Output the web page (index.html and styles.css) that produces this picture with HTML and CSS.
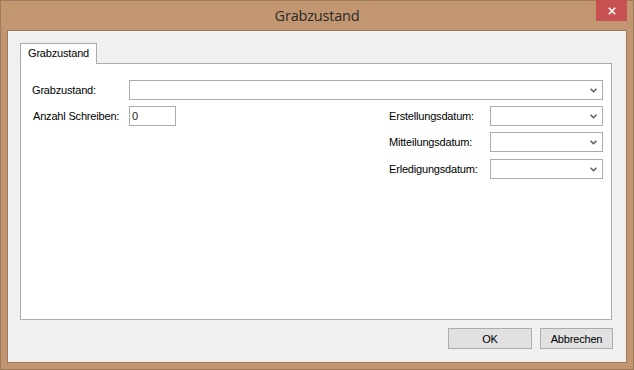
FILE: index.html
```html
<!DOCTYPE html>
<html lang="de">
<head>
<meta charset="utf-8">
<title>Grabzustand</title>
<link rel="stylesheet" href="styles.css">
</head>
<body>
<div class="window">
  <div class="titlebar">
    <span></span>
    <div class="title">Grabzustand</div>
    <div class="close">
      <svg width="8" height="8" viewBox="0 0 8 8"><path d="M0.8 0.8 L7.2 7.2 M7.2 0.8 L0.8 7.2" stroke="#fff" stroke-width="1.6" fill="none"/></svg>
    </div>
  </div>
  <div class="client">
    <div class="tabs">
      <div class="tabstrip"><div class="tab">Grabzustand</div></div>
      <div class="panel">
        <div class="row">
          <div class="label l1">Grabzustand:</div>
          <div class="combo wide"><svg class="chev" width="7" height="5" viewBox="0 0 7 5"><path d="M0.6 0.8 L3.5 3.7 L6.4 0.8" stroke="#5a5a5a" stroke-width="1.5" fill="none"/></svg></div>
        </div>
        <div class="split">
          <div class="row left">
            <div class="label l2">Anzahl Schreiben:</div>
            <div class="textbox">0</div>
          </div>
          <div class="dates">
            <div class="row"><div class="label l3">Erstellungsdatum:</div><div class="combo date"><svg class="chev" width="7" height="5" viewBox="0 0 7 5"><path d="M0.6 0.8 L3.5 3.7 L6.4 0.8" stroke="#5a5a5a" stroke-width="1.5" fill="none"/></svg></div></div>
            <div class="row"><div class="label l3">Mitteilungsdatum:</div><div class="combo date"><svg class="chev" width="7" height="5" viewBox="0 0 7 5"><path d="M0.6 0.8 L3.5 3.7 L6.4 0.8" stroke="#5a5a5a" stroke-width="1.5" fill="none"/></svg></div></div>
            <div class="row r3"><div class="label l3">Erledigungsdatum:</div><div class="combo date"><svg class="chev" width="7" height="5" viewBox="0 0 7 5"><path d="M0.6 0.8 L3.5 3.7 L6.4 0.8" stroke="#5a5a5a" stroke-width="1.5" fill="none"/></svg></div></div>
          </div>
        </div>
      </div>
    </div>
    <div class="footer">
      <div class="btn ok">OK</div>
      <div class="btn cancel">Abbrechen</div>
    </div>
  </div>
</div>
</body>
</html>
```
FILE: styles.css
```css
* { box-sizing: border-box; }
html, body { margin: 0; padding: 0; }
body {
  width: 634px; height: 370px; overflow: hidden;
  font-family: "Liberation Sans", Arial, sans-serif;
  font-size: 11px; color: #000;
  letter-spacing: -0.18px;
}
.window {
  width: 634px; height: 370px;
  background: #c19671;
  border: 1px solid #9c7a5b;
  display: flex; flex-direction: column;
}
.titlebar {
  height: 29px;
  display: grid;
  grid-template-columns: 1fr auto 1fr;
  align-items: start;
}
.title {
  font-family: "Open Sans", "Noto Sans", sans-serif;
  font-size: 14.5px;
  color: #2a2a2a;
  line-height: 29px;
  letter-spacing: -0.2px;
}
.close {
  justify-self: end;
  margin-top: -1px;
  margin-right: 6px;
  width: 31px; height: 21px;
  background: #c75050;
  display: flex; align-items: center; justify-content: center;
}
.client {
  flex: 1;
  margin: 0 6px 6px 6px;
  border: 1px solid #9c7a5b;
  background: #f0f0f0;
  padding: 12px 0 0 12px;
  display: flex; flex-direction: column;
}
.tabs { margin-right: 14px; display: flex; flex-direction: column; }
.tabstrip { display: flex; height: 20px; }
.tab {
  width: 77px; height: 21px;
  background: #fff;
  border: 1px solid #acacac;
  border-bottom: none;
  position: relative; z-index: 1;
  padding-left: 7px;
  line-height: 19px;
}
.panel {
  height: 257px;
  background: #fff;
  border: 1px solid #acacac;
  padding: 16px 8px 0 11px;
}
.row { display: flex; align-items: center; }
.label { white-space: nowrap; }
.l1, .l2 { width: 97px; }
.l2 { padding-left: 1px; }
.l3 { width: 101px; }
.combo {
  height: 20px;
  border: 1px solid #acacac;
  background: #fff;
  display: flex; align-items: center; justify-content: flex-end;
  padding-right: 5px;
}
.wide { flex: 1; }
.date { width: 113px; }
.chev { display: block; margin-top: 1px; }
.split { display: flex; justify-content: space-between; margin-top: 6px; }
.left { align-self: flex-start; }
.textbox {
  width: 47px; height: 20px;
  border: 1px solid #acacac;
  background: #fff;
  padding-left: 2px;
  line-height: 18px;
  color: #1a1a1a;
}
.dates { display: flex; flex-direction: column; gap: 6px; }
.r3 { margin-top: 1px; }
.footer {
  display: flex; justify-content: flex-end; gap: 8px;
  margin-top: 8px; margin-right: 13px;
}
.btn {
  height: 21px;
  background: #e1e1e1;
  border: 1px solid #adadad;
  display: flex; align-items: center; justify-content: center;
}
.ok { width: 84px; }
.cancel { width: 73px; }
```
